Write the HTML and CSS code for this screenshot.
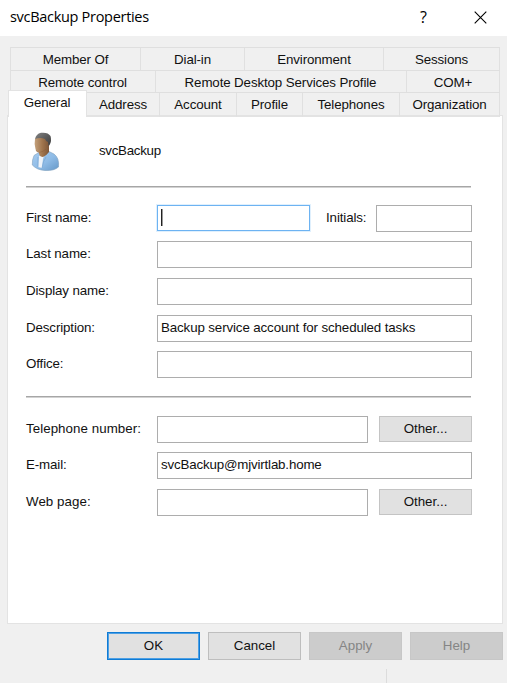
FILE: index.html
```html
<!DOCTYPE html>
<html lang="en">
<head>
<meta charset="utf-8">
<title>svcBackup Properties</title>
<link rel="stylesheet" href="styles.css">
</head>
<body>
<div class="dialog">
  <header class="titlebar">
    <span class="title">svcBackup Properties</span>
    <span class="help">?</span>
    <svg class="close" width="13" height="13" viewBox="0 0 13 13"><path d="M.7.7 12.3 12.3M12.3.7.7 12.3" stroke="#000" stroke-width="1.1" fill="none"/></svg>
  </header>
  <nav class="tabs">
    <div class="tab-row row-one"><span class="tab">Member Of</span><span class="tab">Dial-in</span><span class="tab">Environment</span><span class="tab">Sessions</span></div>
    <div class="tab-row row-two"><span class="tab">Remote control</span><span class="tab">Remote Desktop Services Profile</span><span class="tab">COM+</span></div>
    <div class="tab-row row-three"><span class="tab active">General</span><span class="tab">Address</span><span class="tab">Account</span><span class="tab">Profile</span><span class="tab">Telephones</span><span class="tab">Organization</span></div>
  </nav>
  <main class="panel">
    <div class="identity">
      <svg class="avatar" width="30" height="40" viewBox="0 0 30 40">
        <defs>
          <linearGradient id="skin" x1="0" x2="1"><stop offset="0" stop-color="#c4a17c"/><stop offset=".5" stop-color="#a0754d"/><stop offset="1" stop-color="#795235"/></linearGradient>
          <linearGradient id="hair" x1="0" x2="1" y2="1"><stop offset="0" stop-color="#858585"/><stop offset=".5" stop-color="#5c5c5c"/><stop offset="1" stop-color="#3c3c3c"/></linearGradient>
          <linearGradient id="shirt" x1="0" x2="1" y2="1"><stop offset="0" stop-color="#a8cdf0"/><stop offset=".55" stop-color="#8ebbe6"/><stop offset="1" stop-color="#6598c8"/></linearGradient>
        </defs>
        <path d="M7 21 3 23.500Q1 28 1.300 33Q6 38 14 38.500Q23 39 27.500 35Q28.500 26 23 22L17 19Z" fill="url(#shirt)" stroke="#7d9fbe" stroke-width=".6"/>
        <path d="M8 24 7 35 11 36 12 27 13 24Z" fill="#eef3f9"/>
        <path d="M7 25 7 35M11 36Q12 29 15 25" fill="none" stroke="#77a5d1" stroke-width=".7"/>
        <path d="M4 7Q3 12 4.500 17Q5 20 8 20.500L8 22Q9 25 12 25Q16 23 18 20L18 14 19 6 8 4Z" fill="url(#skin)"/>
        <path d="M5 18Q6 20.500 8 20.500Q12 20 15 17" fill="none" stroke="#7b5233" stroke-width=".6" opacity=".5"/>
        <path d="M4 7Q5 2 10 .8Q17 0 19.500 4Q21 9 18.500 13L17.500 14 17 10Q15 10 14 7Q9 5 4 7Z" fill="url(#hair)"/>
      </svg>
      <span class="account">svcBackup</span>
    </div>
    <hr class="rule">
    <form class="fields personal">
      <div class="field"><label>First name:</label><div class="box first focused"><i class="caret"></i></div><label class="initials-label">Initials:</label><div class="box initials"></div></div>
      <div class="field"><label>Last name:</label><div class="box"></div></div>
      <div class="field"><label>Display name:</label><div class="box"></div></div>
      <div class="field"><label>Description:</label><div class="box">Backup service account for scheduled tasks</div></div>
      <div class="field"><label>Office:</label><div class="box"></div></div>
    </form>
    <hr class="rule">
    <form class="fields contact">
      <div class="field"><label class="wide">Telephone number:</label><div class="box short"></div><button type="button" class="other">Other...</button></div>
      <div class="field"><label>E-mail:</label><div class="box email">svcBackup@mjvirtlab.home</div></div>
      <div class="field"><label class="wide">Web page:</label><div class="box short"></div><button type="button" class="other">Other...</button></div>
    </form>
  </main>
  <footer class="actions">
    <button class="default">OK</button><button>Cancel</button><button disabled>Apply</button><button disabled>Help</button>
  </footer>
  <div class="bottom-edge"></div>
</div>
</body>
</html>
```
FILE: styles.css
```css
* { box-sizing: border-box; }
body {
  margin: 0;
  background: #f0f0f0;
  color: #111;
  font: 13.33px/16px "Liberation Sans", Arial, sans-serif;
  letter-spacing: -0.12px;
}
.dialog { width: 507px; height: 683px; overflow: hidden; }
.titlebar {
  display: flex;
  align-items: center;
  height: 36px;
  padding: 0 20px 2px 10px;
  background: #fff;
  color: #000;
  letter-spacing: 0;
}
.title { flex: 1; font: 14.5px/20px "Open Sans", "Noto Sans", sans-serif; letter-spacing: -0.3px; }
.help { width: 10px; margin-right: 44px; font: 16px/20px "Open Sans", sans-serif; }
.close { display: block; }
.tabs { margin: 11px 7px 0 10px; }
.tab-row { display: grid; width: 490px; height: 23px; border-left: 1px solid #e0e0e0; }
.row-one { grid-template-columns: 130px 104px 139px 116px; }
.row-two { grid-template-columns: 145px 251px 93px; height: 22px; }
.row-three { grid-template-columns: 76px 73px 77px 66px 97px 100px; }
.tab {
  display: flex;
  align-items: center;
  justify-content: center;
  padding-top: 2px;
  border-top: 1px solid #dfdfdf;
  border-right: 1px solid #e0e0e0;
  white-space: nowrap;
}
.row-three .tab:not(.active) { border-bottom: 1px solid #e3e3e3; padding: 0; }
.row-two .tab { padding: 2px 1px 0 0; }
.row-two .tab:last-child { padding-right: 0; }
.tab.active {
  height: 27px;
  margin: -2px 0 0 -3px;
  padding: 0 1px 2px 0;
  border: 1px solid #e3e3e3;
  border-bottom: 0;
  background: #fff;
  z-index: 1;
}
.panel {
  width: 496px;
  height: 509px;
  margin-left: 7px;
  padding: 16px 28px 0 18px;
  border: 1px solid #e3e3e3;
  background: #fff;
}
.identity { display: flex; height: 54px; }
.avatar { margin-left: 5px; }
.account { margin: 11px 0 0 38px; letter-spacing: -0.3px; }
.rule { width: 445px; height: 2px; margin: 0; border: 0; border-top: 1px solid #a6a6a6; background: #d2d2d2; }
.fields { display: grid; width: 446px; }
.personal { grid-template-rows: 36px 37px 37px 36px 45px; padding-top: 17px; }
.contact { grid-template-rows: 36px 37px 27px; padding-top: 18px; }
.field { display: flex; align-items: flex-start; }
.field label { width: 131px; padding-top: 5px; }
.field .wide { letter-spacing: 0.05px; }
.box { flex: 1; height: 27px; padding: 4px 3px; border: 1px solid #adadad; background: #fff; white-space: nowrap; }
.box.first { flex: 0 0 153px; }
.box.focused { height: 26px; border: 1px solid #6db3f2; box-shadow: 0 0 0 1px #e0f0fd; }
.caret { display: block; width: 2px; height: 17px; margin-top: -1px; background: linear-gradient(90deg, #222 50%, #999 50%); margin-left: 0; }
.field .initials-label { width: 50px; margin-left: 16px; }
.box.short { flex: 0 0 211px; }
.box.email { letter-spacing: -0.17px; }
button { height: 28px; padding: 0; border: 1px solid #bebebe; background: #e1e1e1; color: #111; font: inherit; letter-spacing: 0; }
.other { width: 93px; height: 26px; margin-left: 11px; border-color: #c4c4c4; }
.actions { display: grid; grid-template-columns: repeat(4, 93px); gap: 8px; margin: 8px 0 0 107px; }
.actions .default { border: 1px solid #0f7bd5; box-shadow: inset 0 0 0 1px #4ea0e4; }
.actions button:disabled { border-color: #c7c7c7; background: #ccc; color: #858585; }
.bottom-edge { width: 1px; height: 14px; margin: 9px 0 0 386px; background: #dcdcdc; }
```
